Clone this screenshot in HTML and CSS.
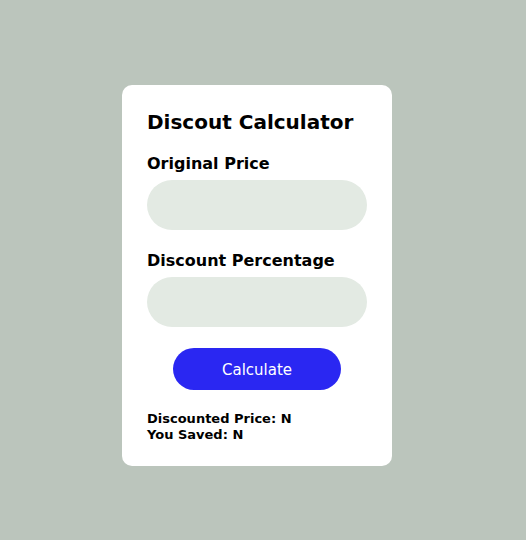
FILE: index.html
```html
<!DOCTYPE html>
<html>
<head>
<meta charset="utf-8">
<link rel="stylesheet" href="styles.css">
</head>
<body>
<div class="card">
  <h1 class="title">Discout Calculator</h1>
  <label class="label">Original Price</label>
  <input class="field" type="text">
  <label class="label">Discount Percentage</label>
  <input class="field" type="text">
  <div class="actions"><button class="btn">Calculate</button></div>
  <div class="results">
    <div>Discounted Price: N</div>
    <div>You Saved: N</div>
  </div>
</div>
</body>
</html>
```
FILE: styles.css
```css
html, body { margin: 0; }
body {
  background: #bbc5bc;
  font-family: "DejaVu Sans", Verdana, sans-serif;
  min-height: 540px;
  box-sizing: border-box;
  display: flex;
  justify-content: center;
  align-items: center;
  padding: 11px 12px 0 0;
}
.card {
  width: 270px;
  box-sizing: border-box;
  background: #fff;
  border-radius: 10px;
  padding: 25px 25px 23px;
  display: flex;
  flex-direction: column;
}
.title {
  font-size: 20px;
  line-height: 24px;
  font-weight: bold;
  margin: 0 0 20px;
  color: #000;
}
.label {
  font-size: 16px;
  line-height: 20px;
  font-weight: bold;
  margin-bottom: 6px;
  color: #000;
}
.field {
  height: 50px;
  border: none;
  border-radius: 25px;
  background: #e3eae3;
  margin: 0 0 21px;
  outline: none;
  padding: 0 16px;
}
.field + .actions { margin-top: 0; }
.actions { display: flex; justify-content: center; }
.btn {
  width: 168px;
  height: 42px;
  border: none;
  border-radius: 21px;
  background: #2a27f2;
  color: #fff;
  font-family: "DejaVu Sans", Verdana, sans-serif;
  font-size: 15px;
  padding: 1px 0 0;
}
.results {
  margin-top: 21px;
  font-size: 13px;
  font-weight: bold;
  line-height: 16px;
  color: #000;
}
```
